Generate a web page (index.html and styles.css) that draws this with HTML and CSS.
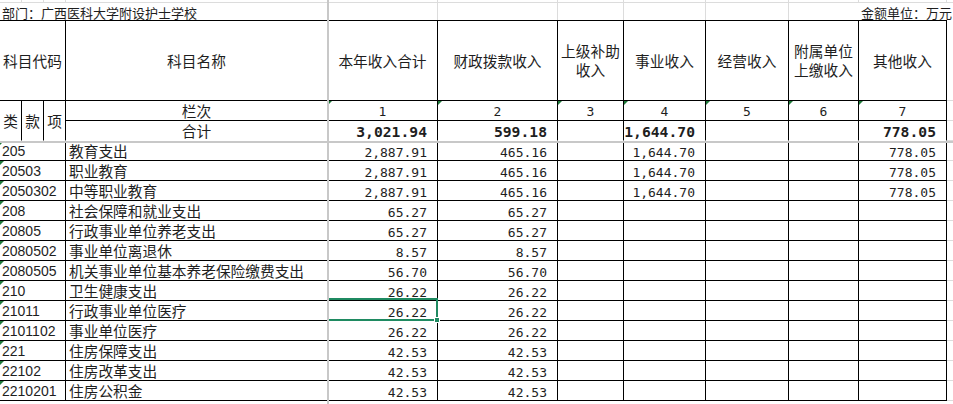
FILE: index.html
```html
<!DOCTYPE html>
<html lang="zh-CN">
<head>
<meta charset="utf-8">
<title>收入决算表</title>
<link rel="stylesheet" href="styles.css">
</head>
<body>
<table class="sheet">
<colgroup>
<col class="w-a"><col class="w-a"><col class="w-a"><col class="w-name"><col class="w-total"><col class="w-fin"><col class="w-sub"><col class="w-biz"><col class="w-op"><col class="w-aff"><col class="w-oth"><col class="w-pad">
</colgroup>
<tbody>
<tr class="r-top"><td></td><td></td><td></td><td></td><td></td><td></td><td></td><td></td><td></td><td></td><td></td><td class="pad"></td></tr>
<tr class="r-title"><td colspan="4" class="title-l">部门：广西医科大学附设护士学校</td><td></td><td></td><td></td><td></td><td></td><td colspan="3" class="title-r">金额单位：万元</td></tr>
<tr class="r-head">
<td colspan="3">科目代码</td>
<td>科目名称</td>
<td>本年收入合计</td>
<td>财政拨款收入</td>
<td class="two">上级补助<br>收入</td>
<td>事业收入</td>
<td>经营收入</td>
<td class="two">附属单位<br>上缴收入</td>
<td>其他收入</td>
<td class="pad"></td>
</tr>
<tr class="r-idx">
<td rowspan="2" class="k">类</td><td rowspan="2" class="k">款</td><td rowspan="2" class="k">项</td>
<td class="c">栏次</td>
<td class="n c mk">1</td><td class="n c mk">2</td><td class="n c mk">3</td><td class="n c mk">4</td><td class="n c mk">5</td><td class="n c mk">6</td><td class="n c mk">7</td>
<td class="pad"></td>
</tr>
<tr class="r-sum">
<td class="c">合计</td>
<td class="n b">3,021.94</td><td class="n b">599.18</td><td></td><td class="n b">1,644.70</td><td></td><td></td><td class="n b">778.05</td>
<td class="pad"></td>
</tr>
<tr class="r-data"><td colspan="3" class="code mk">205</td><td class="name">教育支出</td><td class="n">2,887.91</td><td class="n">465.16</td><td></td><td class="n">1,644.70</td><td></td><td></td><td class="n">778.05</td><td class="pad"></td></tr>
<tr class="r-data"><td colspan="3" class="code mk">20503</td><td class="name">职业教育</td><td class="n">2,887.91</td><td class="n">465.16</td><td></td><td class="n">1,644.70</td><td></td><td></td><td class="n">778.05</td><td class="pad"></td></tr>
<tr class="r-data"><td colspan="3" class="code mk">2050302</td><td class="name">中等职业教育</td><td class="n">2,887.91</td><td class="n">465.16</td><td></td><td class="n">1,644.70</td><td></td><td></td><td class="n">778.05</td><td class="pad"></td></tr>
<tr class="r-data"><td colspan="3" class="code mk">208</td><td class="name">社会保障和就业支出</td><td class="n">65.27</td><td class="n">65.27</td><td></td><td></td><td></td><td></td><td></td><td class="pad"></td></tr>
<tr class="r-data"><td colspan="3" class="code mk">20805</td><td class="name">行政事业单位养老支出</td><td class="n">65.27</td><td class="n">65.27</td><td></td><td></td><td></td><td></td><td></td><td class="pad"></td></tr>
<tr class="r-data"><td colspan="3" class="code mk">2080502</td><td class="name">事业单位离退休</td><td class="n">8.57</td><td class="n">8.57</td><td></td><td></td><td></td><td></td><td></td><td class="pad"></td></tr>
<tr class="r-data"><td colspan="3" class="code mk">2080505</td><td class="name">机关事业单位基本养老保险缴费支出</td><td class="n">56.70</td><td class="n">56.70</td><td></td><td></td><td></td><td></td><td></td><td class="pad"></td></tr>
<tr class="r-data"><td colspan="3" class="code mk">210</td><td class="name">卫生健康支出</td><td class="n">26.22</td><td class="n">26.22</td><td></td><td></td><td></td><td></td><td></td><td class="pad"></td></tr>
<tr class="r-data"><td colspan="3" class="code mk">21011</td><td class="name">行政事业单位医疗</td><td class="n">26.22</td><td class="n">26.22</td><td></td><td></td><td></td><td></td><td></td><td class="pad"></td></tr>
<tr class="r-data"><td colspan="3" class="code mk">2101102</td><td class="name">事业单位医疗</td><td class="n">26.22</td><td class="n">26.22</td><td></td><td></td><td></td><td></td><td></td><td class="pad"></td></tr>
<tr class="r-data"><td colspan="3" class="code mk">221</td><td class="name">住房保障支出</td><td class="n">42.53</td><td class="n">42.53</td><td></td><td></td><td></td><td></td><td></td><td class="pad"></td></tr>
<tr class="r-data"><td colspan="3" class="code mk">22102</td><td class="name">住房改革支出</td><td class="n">42.53</td><td class="n">42.53</td><td></td><td></td><td></td><td></td><td></td><td class="pad"></td></tr>
<tr class="r-data"><td colspan="3" class="code mk">2210201</td><td class="name">住房公积金</td><td class="n">42.53</td><td class="n">42.53</td><td></td><td></td><td></td><td></td><td></td><td class="pad"></td></tr>
</tbody>
</table>
<div class="sel"><div class="sel-handle"></div></div>
<div class="freeze-v"></div>
<div class="freeze-h"></div>
</body>
</html>
```
FILE: styles.css
```css
* { box-sizing: border-box; }
html, body { margin: 0; padding: 0; }
body {
  position: relative;
  width: 953px;
  height: 404px;
  overflow: hidden;
  background: #fff;
  color: #1e1e1e;
  font-family: "Noto Sans CJK SC", "Noto Sans", sans-serif;
}

.sheet { border-collapse: separate; border-spacing: 0; table-layout: fixed; width: 953px; }
.w-a { width: 22px; }
.w-name { width: 262px; }
.w-total { width: 110px; }
.w-fin { width: 120px; }
.w-sub { width: 66px; }
.w-biz { width: 82px; }
.w-op { width: 83px; }
.w-aff { width: 70px; }
.w-oth { width: 88px; }
.w-pad { width: 6px; }

.sheet td {
  position: relative;
  padding: 0;
  border: 0;
  border-right: 1px solid #000;
  border-bottom: 1px solid #000;
  font-size: 14.7px;
  line-height: 18px;
  vertical-align: bottom;
  white-space: nowrap;
  overflow: hidden;
}
.sheet td.pad { border-right: 0; border-bottom-color: #dcdcdc; }

.r-top { height: 3px; }
.r-title { height: 17px; }
.r-head { height: 81px; }
.r-idx, .r-sum, .r-data { height: 20px; }

.r-top td { border-right-color: #dcdcdc; border-bottom-color: #dcdcdc; font-size: 0; line-height: 0; }
.r-title td { border-bottom: 0; border-right-color: #dcdcdc; font-size: 13px; line-height: 15px; }
.r-title td.title-l, .r-title td.title-r { border-right: 0; overflow: visible; }
.sheet td.title-l { padding-left: 2px; }
.sheet td.title-r { text-align: right; padding-right: 1px; }

.r-head td { border-top: 1px solid #000; text-align: center; vertical-align: middle; white-space: normal; }
.r-head td.pad { border-top: 0; }
.sheet td.two { line-height: 18.5px; }

.r-sum td { border-bottom-color: transparent; }
.sheet td.k { text-align: center; vertical-align: middle; border-bottom-color: transparent; line-height: 20px; }
.c { text-align: center; }
.r-idx .c, .r-sum .c { line-height: 19px; }

.sheet td.n {
  font-family: "DejaVu Sans Mono", "Liberation Mono", monospace;
  font-size: 13px;
  line-height: 14px;
  text-align: right;
  padding-right: 10px;
}
.sheet td.n.c { text-align: center; padding-right: 0; line-height: 16px; }
.sheet td.n.b { font-weight: bold; font-size: 14.7px; line-height: 17px; }

.sheet td.code {
  font-family: "Liberation Sans", Arial, sans-serif;
  font-size: 14px;
  line-height: 18px;
  padding-left: 2px;
}
.sheet td.name { padding-left: 3px; }

.mk::before {
  content: "";
  position: absolute;
  left: 0;
  top: 0;
  border-top: 4px solid #1f7a3a;
  border-right: 4px solid transparent;
}

.sel {
  position: absolute;
  left: 327px;
  top: 298px;
  width: 111px;
  height: 23px;
  border: 2px solid #1f8a61;
}
.sel-handle {
  position: absolute;
  right: -4px;
  bottom: -4px;
  width: 6px;
  height: 6px;
  background: #1f8a61;
  border: 1px solid #fff;
}

.freeze-v { position: absolute; left: 327px; top: 0; width: 2px; height: 404px; background: #c8c8c8; }
.freeze-h { position: absolute; left: 0; top: 141px; width: 953px; height: 2px; background: #c8c8c8; }
```
